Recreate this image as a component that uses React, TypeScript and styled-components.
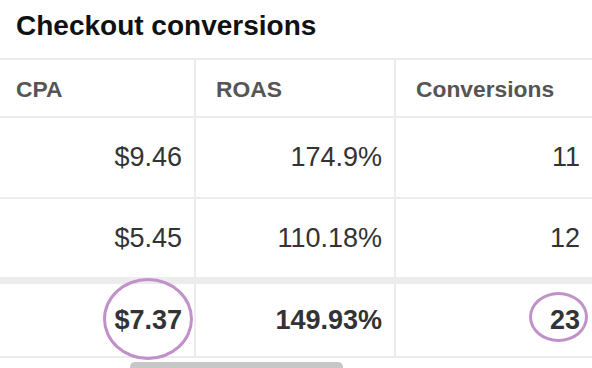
import React from 'react'
import styled, { createGlobalStyle } from 'styled-components'

const GlobalStyle = createGlobalStyle`
  html, body {
    margin: 0;
    padding: 0;
    background: #fff;
    overflow: hidden;
  }
  body {
    font-family: "Liberation Sans", Arial, Helvetica, sans-serif;
  }
`

const Panel = styled.div`
  width: 592px;
  height: 368px;
  overflow: hidden;
  background: #fff;
`

const Title = styled.h2`
  margin: 0;
  padding: 10px 0 16px 16px;
  font-size: 28px;
  line-height: 32px;
  font-weight: bold;
  color: #111;
`

const Table = styled.div`
  border-top: 2px solid #ececec;
`

const Row = styled.div<{ $h: number; $total?: boolean }>`
  display: grid;
  grid-template-columns: 194px 200px 198px;
  height: ${({ $h }) => $h}px;
  border-bottom: 2px solid #ececec;
  ${({ $total }) => ($total ? 'border-top: 7px solid #ececec; margin-top: -2px;' : '')}
  box-sizing: content-box;
`

const HeadCell = styled.div<{ $first?: boolean }>`
  display: flex;
  align-items: center;
  padding: 2px 0 0 ${({ $first }) => ($first ? 16 : 20)}px;
  border-left: ${({ $first }) => ($first ? 'none' : '2px solid #ececec')};
  font-size: 22.8px;
  font-weight: bold;
  color: #555;
`

const Cell = styled.div<{ $first?: boolean; $bold?: boolean }>`
  display: flex;
  align-items: center;
  justify-content: flex-end;
  padding-right: 12px;
  border-left: ${({ $first }) => ($first ? 'none' : '2px solid #ececec')};
  font-size: 27px;
  font-weight: ${({ $bold }) => ($bold ? 'bold' : 'normal')};
  color: #333;
`

const Marked = styled.span`
  position: relative;
`

const Ring = styled.span<{ $w: number; $h: number; $dx: number; $dy: number }>`
  position: absolute;
  left: 50%;
  top: 50%;
  width: ${({ $w }) => $w}px;
  height: ${({ $h }) => $h}px;
  margin-left: ${({ $w, $dx }) => -$w / 2 + $dx}px;
  margin-top: ${({ $h, $dy }) => -$h / 2 + $dy}px;
  border: 3px solid #c192c9;
  border-radius: 50%;
  box-sizing: border-box;
  pointer-events: none;
`

const ScrollThumb = styled.div`
  margin: 4px 0 0 130px;
  width: 213px;
  height: 10px;
  border-radius: 5px;
  background: #c7c7c7;
`

const rows = [
  { cpa: '$9.46', roas: '174.9%', conv: '11', h: 79 },
  { cpa: '$5.45', roas: '110.18%', conv: '12', h: 78 },
]

export default function App() {
  return (
    <Panel>
      <GlobalStyle />
      <Title>Checkout conversions</Title>
      <Table>
        <Row $h={56}>
          <HeadCell $first>CPA</HeadCell>
          <HeadCell>ROAS</HeadCell>
          <HeadCell>Conversions</HeadCell>
        </Row>
        {rows.map((r) => (
          <Row key={r.cpa} $h={r.h}>
            <Cell $first>{r.cpa}</Cell>
            <Cell>{r.roas}</Cell>
            <Cell>{r.conv}</Cell>
          </Row>
        ))}
        <Row $h={72} $total>
          <Cell $first $bold>
            <Marked>
              $7.37
              <Ring $w={90} $h={82} $dx={0} $dy={-1} />
            </Marked>
          </Cell>
          <Cell $bold>149.93%</Cell>
          <Cell $bold>
            <Marked>
              23
              <Ring $w={59} $h={50} $dx={-6} $dy={-3} />
            </Marked>
          </Cell>
        </Row>
      </Table>
      <ScrollThumb />
    </Panel>
  )
}
